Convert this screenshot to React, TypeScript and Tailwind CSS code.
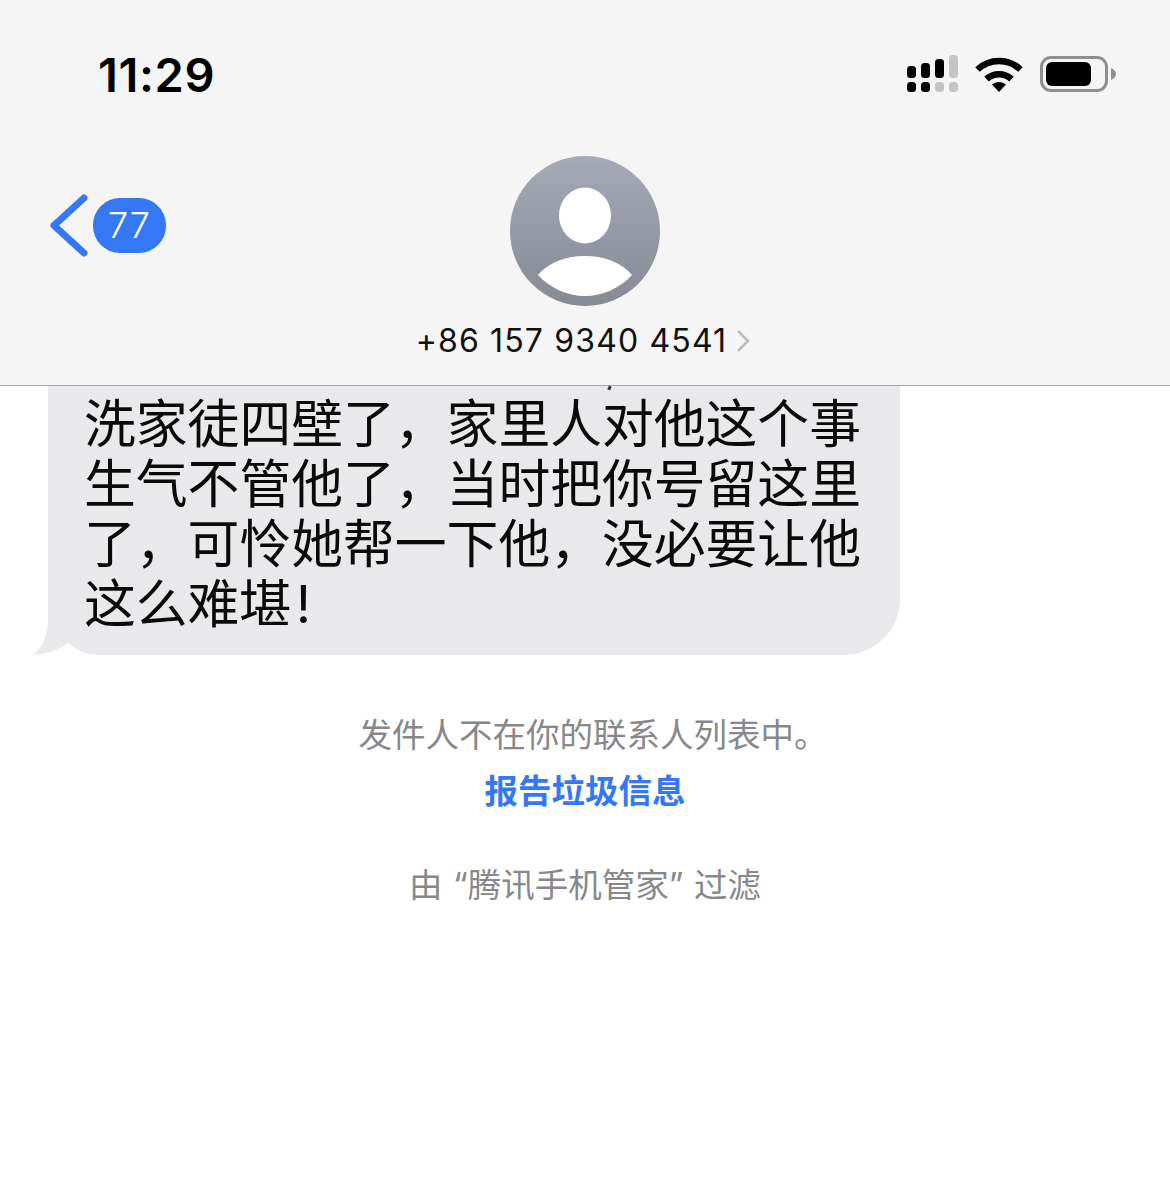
const CJK = "font-['Inter','Noto_Sans_CJK_SC',sans-serif]";

const MESSAGE = "洗家徒四壁了，家里人对他这个事生气不管他了，当时把你号留这里了，可怜她帮一下他，没必要让他这么难堪\u200a!";

function SignalIcon() {
  return (
    <svg width="52" height="38" viewBox="0 0 52 38">
      <rect x="1" y="11" width="9" height="12" rx="3.5" fill="#000" />
      <rect x="15" y="8" width="9" height="15" rx="3.5" fill="#000" />
      <rect x="29" y="4" width="9" height="19" rx="3.5" fill="#000" />
      <rect x="43" y="0" width="9" height="23" rx="3.5" fill="#c4c4c4" />
      <rect x="1" y="27" width="9" height="10" rx="3.5" fill="#000" />
      <rect x="15" y="27" width="9" height="10" rx="3.5" fill="#000" />
      <rect x="29" y="27" width="9" height="10" rx="3.5" fill="#c4c4c4" />
      <rect x="43" y="27" width="9" height="10" rx="3.5" fill="#c4c4c4" />
    </svg>
  );
}

function WifiIcon() {
  return (
    <svg width="48" height="38" viewBox="0 0 48 38">
      <path d="M2.5 14.5C14.5 3 33.5 3 45.5 14.5" fill="none" stroke="#000" strokeWidth="6.5" />
      <path d="M11.5 24C18.5 17.5 29.5 17.5 36.5 24" fill="none" stroke="#000" strokeWidth="6.5" />
      <path d="M17 29.5C21 26 27 26 31 29.5L24 37Z" fill="#000" />
    </svg>
  );
}

function BatteryIcon() {
  return (
    <div className="flex items-center gap-[3px]">
      <div className="w-[68px] h-[36px] rounded-[11px] border-[3px] border-[#8f8f8f] p-[3px] flex">
        <div className="w-[45px] h-full rounded-[6px] bg-black" />
      </div>
      <svg width="5" height="12" viewBox="0 0 5 12">
        <path d="M0 0C3 1.5 5 3.5 5 6C5 8.5 3 10.5 0 12Z" fill="#8f8f8f" />
      </svg>
    </div>
  );
}

function Avatar() {
  return (
    <div className="w-[150px] h-[150px] rounded-full bg-gradient-to-b from-[#a6aab6] to-[#858a94]">
      <svg width="150" height="150" viewBox="0 0 150 150">
        <ellipse cx="75" cy="59.5" rx="26" ry="28" fill="#fff" />
        <path d="M28 119C38 107 55 100 75 100C95 100 112 107 122 119C110 132 93 140 75 140C57 140 40 132 28 119Z" fill="#fff" />
      </svg>
    </div>
  );
}

export default function App() {
  return (
    <div className={`min-h-screen bg-white ${CJK}`}>
      <header className="h-[386px] bg-[#f5f5f5] border-b border-[#a8a8a8]">
        {/* Status bar */}
        <div className="h-[148px] pl-[98px] pr-[54px] flex items-center justify-between">
          <span className="text-[47px] leading-none font-semibold text-black tracking-[0.6px]">11:29</span>
          <div className="flex items-center gap-[17px]">
            <SignalIcon />
            <WifiIcon />
            <BatteryIcon />
          </div>
        </div>

        {/* Contact */}
        <div className="mt-2 grid grid-cols-[1fr_auto_1fr]">
          <div className="pl-[50px] pt-[38px] flex items-start gap-[3px]">
            <svg width="40" height="63" viewBox="0 0 40 63">
              <path d="M34 4L4 31.5L34 59" fill="none" stroke="#3478f6" strokeWidth="7" strokeLinecap="round" strokeLinejoin="round" />
            </svg>
            <span className="mt-[4px] w-[73px] h-[55px] rounded-[27px] bg-[#3478f6] text-white text-[36px] leading-[55px] text-center font-light tracking-[1px]">
              77
            </span>
          </div>
          <Avatar />
          <div />
        </div>
        <div className="mt-[17px] mr-[4px] flex items-center justify-center gap-[9px]">
          <span className="text-[32px] leading-[36px] text-[#111] tracking-[1.15px]">+86 157 9340 4541</span>
          <svg width="14" height="24" viewBox="0 0 14 24">
            <path d="M2 2L12 12L2 22" fill="none" stroke="#bcbcbc" strokeWidth="2.5" />
          </svg>
        </div>
      </header>

      {/* Message */}
      <div className="relative ml-[48px] w-[852px]">
        <div className="bg-[#e9e9eb] rounded-br-[56px] pl-[36px] pr-[36px] pt-[8px] pb-[21px]">
          <p className="relative z-10 text-[51.8px] leading-[60px] text-[#0a0a0a]">{MESSAGE}</p>
        </div>
        {/* bubble tail, white cut-out under the left corner */}
        <svg className="absolute left-[-18px] bottom-0" width="70" height="60" viewBox="0 0 70 60">
          <path d="M18 0V0H70V60H67C56 60 46 55 38 48C28 56 14 60 2 60C12 54 18 40 18 25Z" fill="#e9e9eb" />
          <path d="M18 25C18 40 12 54 2 60H0V0H18Z" fill="#fff" />
          <path d="M67 60C56 60 46 55 38 48C28 56 14 60 2 60Z" fill="#fff" />
        </svg>
        <span className="absolute left-[560px] top-0 w-[3px] h-[4px] bg-[#333] rotate-[25deg]" />
      </div>

      {/* Notices */}
      <div className="mt-[60px] flex flex-col items-center text-[33.5px] leading-[40px]">
        <p className="pl-[16px] text-[#88888c]">发件人不在你的联系人列表中。</p>
        <p className="mt-4 text-[#3478f6] font-semibold">报告垃圾信息</p>
        <p className="mt-[54px] text-[#88888c] [word-spacing:1px]">由 “腾讯手机管家” 过滤</p>
      </div>
    </div>
  );
}
